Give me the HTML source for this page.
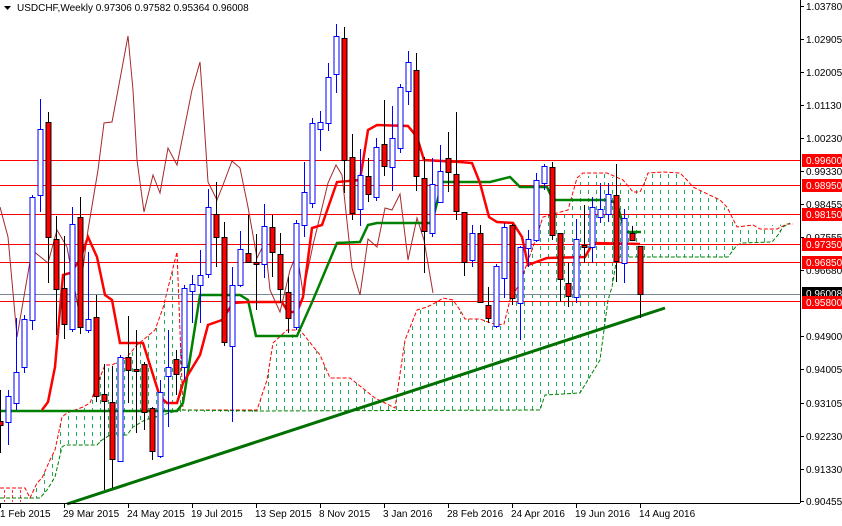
<!DOCTYPE html>
<html><head><meta charset="utf-8"><style>
html,body{margin:0;padding:0;background:#fff;}
body{width:842px;height:521px;overflow:hidden;font-family:"Liberation Sans",sans-serif;}
svg text{font-family:"Liberation Sans",sans-serif;font-size:10px;}
</style></head><body>
<svg id="s" width="842" height="521" viewBox="0 0 842 521" xmlns="http://www.w3.org/2000/svg">
<defs>
<clipPath id="cl1"><polygon points="258,410 275,345 300,330 320,355 330,378 350,378 375,398 395,408 405,340 417,310 437,302 453,300 465,319 480,319 504,324 520,283 543,217 560,212 568,210 577,178 607,173 633,192 648,173 680,173 693,187 720,200 737,227 790,224 790,223 778,235 765,243 742,243 728,257 627,257 617,257 612,287 608,300 600,360 580,393 545,395 540,410"/></clipPath>
<clipPath id="cl2"><polygon points="25,488 30,498 37,483 42,478 50,460 55,450 62,417 67,413 83,407 90,403 105,365 112,365 127,357 137,345 155,330 163,308 177,252 183,410 258,410 258,412 183,412 145,420 133,427 127,435 110,435 102,440 97,445 65,445 62,447 55,477 47,490 40,498 30,498"/></clipPath>
</defs>
<g id="cloud1" clip-path="url(#cl1)" stroke="#22aa55" stroke-width="1" stroke-dasharray="4,4"></g>
<g id="cloud2" clip-path="url(#cl2)" stroke="#22aa55" stroke-width="1" stroke-dasharray="4,4"></g>
<g stroke="#ff3333" stroke-width="1" stroke-dasharray="3,2">
<line x1="4.5" y1="490" x2="4.5" y2="502"/><line x1="12.5" y1="490" x2="12.5" y2="502"/><line x1="20.5" y1="490" x2="20.5" y2="502"/>
</g>
<polyline fill="none" stroke="#ff0000" stroke-width="1" points="0,488 25,488 30,498 37,483 42,478 50,460 55,450 62,417 67,413 83,407 90,403 105,365 112,365 127,357 137,345 155,330 163,308 177,252 183,410 257,410 267,380 273,343 287,330 300,330 320,355 330,378 350,378 375,398 395,408 405,340 417,310 427,307 437,302 443,298 453,300 460,310 465,319 480,319 488,322 497,325 504,324 510,300 520,283 533,247 543,217 557,213 568,210 577,178 583,173 607,173 623,180 633,192 640,192 645,182 648,173 663,172 680,173 687,180 693,187 720,200 727,207 737,227 753,225 760,229 777,229 787,224 793,224" stroke-dasharray="4,2"/>
<polyline fill="none" stroke="#008000" stroke-width="1" points="0,498 30,498 40,498 47,490 55,477 62,447 65,445 97,445 102,440 110,435 127,435 133,427 145,420 180,410 258,411 540,410 545,395 580,393 600,360 608,300 612,287 617,257 728,257 737,245 742,243 772,242 778,235 783,227 790,223" stroke-dasharray="4,2"/>
<g stroke="#ff0000" stroke-width="1">
<line x1="0" y1="160.5" x2="800" y2="160.5"/><line x1="0" y1="185.5" x2="800" y2="185.5"/><line x1="0" y1="214.5" x2="800" y2="214.5"/><line x1="0" y1="244.5" x2="800" y2="244.5"/><line x1="0" y1="262.5" x2="800" y2="262.5"/><line x1="0" y1="301.5" x2="800" y2="301.5"/>
</g>
<line x1="0" y1="294.5" x2="800" y2="294.5" stroke="#778899" stroke-width="1"/>
<polyline fill="none" stroke="#a52a2a" stroke-width="1" points="0,207 8,237 17,337 32,250 48,263 57,230 67,247 78,307 88,230 98,170 104,123 112,122 118,90 128,36 133,90 137,160 144,212 153,175 160,193 168,148 177,165 192,90 200,62 202,90 208,182 217,200 223,185 232,161 240,168 248,207 257,258 265,242 270,290 280,312 290,270 297,253 303,293 313,245 328,183 336,165 342,175 352,268 360,295 368,239 377,247 385,208 392,210 400,194 408,260 417,218 424,240 433,293"/>
<polyline fill="none" stroke="#008000" stroke-width="2.5" points="0,411 177,411 183,403 200,295 240,295 248,300 256,336 297,336 313,300 337,243 360,242 368,225 377,223 432,223 442,182 490,182 510,177 520,187 547,187 553,200 607,200 617,203 625,232 641,232"/>
<polyline fill="none" stroke="#ff0000" stroke-width="2.5" points="42,410 48,402 55,367 63,275 70,273 80,260 88,237 97,257 105,295 112,300 120,343 143,343 160,397 167,403 177,403 183,383 200,355 208,325 222,320 233,303 248,302 282,302 288,312 297,312 303,297 312,228 322,225 337,182 360,180 368,130 377,125 408,126 417,137 424,160 460,162 472,163 480,183 489,217 497,222 513,223 522,237 528,265 547,258 585,257 593,243 640,244"/>
<line x1="67" y1="504" x2="665" y2="308" stroke="#007000" stroke-width="3"/>
<g id="candles"></g>
<line x1="800.5" y1="0" x2="800.5" y2="503" stroke="#000"/>
<line x1="0" y1="503.5" x2="800" y2="503.5" stroke="#000"/>
<g id="axis"></g>
<text x="17" y="11" style="font-size:10px">USDCHF,Weekly  0.97306 0.97582 0.95364 0.96008</text>
<polygon points="4,6 11,6 7.5,10" fill="#000"/>
</svg>
<script>
var NS="http://www.w3.org/2000/svg";
function el(p,t,a,txt){var e=document.createElementNS(NS,t);for(var k in a)e.setAttribute(k,a[k]);if(txt)e.textContent=txt;p.appendChild(e);return e;}
var c1=document.getElementById('cloud1'),c2=document.getElementById('cloud2');
for(var x=4.5;x<800;x+=8){el(c1,'line',{x1:x,y1:150,x2:x,y2:420});el(c2,'line',{x1:x,y1:240,x2:x,y2:505});}
var D=[[0,'d',421,425,390,453],[8,'u',396,422,390,445],[16,'u',372,403,318,410],[24,'u',319,367,315,373],[32,'u',197,320,195,330],[40,'u',129,195,99,212],[48,'d',122,237,112,283],[56,'d',239,289,216,335],[64,'d',288,324,236,339],[72,'u',224,329,207,332],[80,'d',217,327,197,334],[88,'u',319,330,252,333],[96,'d',317,396,295,402],[104,'d',394,401,364,490],[112,'d',402,459,366,488],[120,'u',357,461,355,462],[128,'d',357,370,316,403],[136,'d',369,371,330,433],[144,'d',364,412,362,430],[152,'d',408,451,407,460],[160,'u',392,456,380,458],[168,'u',367,376,330,427],[176,'d',359,374,350,395],[184,'u',288,367,285,380],[192,'u',284,291,275,323],[200,'u',275,285,250,323],[208,'u',207,274,189,278],[216,'d',214,237,182,267],[224,'d',237,342,222,346],[232,'u',285,346,267,422],[240,'u',249,285,231,287],[248,'d',253,262,215,263],[256,'d',262,264,234,310],[264,'u',226,264,204,278],[272,'d',227,252,215,277],[280,'d',254,289,233,303],[288,'d',292,318,277,333],[296,'u',223,327,220,330],[304,'u',192,225,162,237],[312,'u',123,203,118,208],[320,'u',122,129,111,151],[328,'u',77,123,63,131],[336,'u',36,74,24,93],[344,'d',38,160,27,193],[352,'d',157,213,134,220],[360,'u',175,209,149,226],[368,'d',176,194,158,202],[376,'u',147,197,138,201],[384,'d',144,166,100,176],[392,'u',138,167,106,191],[400,'u',87,148,84,153],[408,'u',62,91,51,105],[416,'d',70,176,53,191],[424,'d',178,231,157,273],[432,'u',184,233,158,237],[440,'u',171,202,145,203],[448,'d',158,172,132,192],[456,'d',174,211,112,220],[464,'d',212,262,212,276],[472,'u',233,260,225,267],[480,'d',233,302,225,302],[488,'d',305,318,287,323],[496,'u',266,326,264,328],[504,'u',227,278,223,298],[512,'d',225,298,224,305],[520,'u',247,303,246,340],[528,'u',239,248,230,267],[536,'u',180,240,173,242],[544,'u',166,183,164,190],[552,'d',167,235,162,240],[560,'d',233,279,233,302],[568,'d',283,296,263,307],[576,'u',239,297,219,303],[584,'d',245,247,205,263],[592,'u',207,247,197,263],[600,'u',209,217,183,223],[608,'u',194,214,183,222],[616,'d',195,261,164,282],[624,'u',218,263,209,283],[632,'d',233,240,226,241],[640,'d',246,294,246,318]];
var g=document.getElementById('candles');
D.forEach(function(d){var x=d[0]+0.5,up=d[1]=='u';var col=up?'#0000ff':'#000';
el(g,'line',{x1:x,y1:d[4],x2:x,y2:d[5],stroke:col});
el(g,'rect',{x:x-2.5,y:d[2]+0.5,width:5,height:Math.max(1,d[3]-d[2]),fill:up?'#fff':'#ff0000',stroke:col});});
var ax=document.getElementById('axis');
[['1.03780',6],['1.02905',39],['1.02005',72],['1.01130',105],['1.00230',138],['0.99330',171],['0.98455',204],['0.97555',237],['0.96680',270],['0.94900',336],['0.94005',369],['0.93105',403],['0.92230',436],['0.91330',469],['0.90455',501]].forEach(function(l){
el(ax,'line',{x1:800,y1:l[1]+0.5,x2:804,y2:l[1]+0.5,stroke:'#000'});el(ax,'text',{x:806,y:l[1]+4},l[0]);});
function box(y,t,c){el(ax,'rect',{x:802,y:y-6,width:40,height:13,fill:c});el(ax,'text',{x:806,y:y+4,fill:'#fff'},t);}
box(160,'0.99600','#ff0000');box(185,'0.98950','#ff0000');box(214,'0.98150','#ff0000');box(244,'0.97350','#ff0000');box(262,'0.96850','#ff0000');box(293,'0.96008','#000');box(302,'0.95800','#ff0000');
[['1 Feb 2015',0],['29 Mar 2015',64],['24 May 2015',128],['19 Jul 2015',192],['13 Sep 2015',256],['8 Nov 2015',320],['3 Jan 2016',384],['28 Feb 2016',448],['24 Apr 2016',512],['19 Jun 2016',576],['14 Aug 2016',640]].forEach(function(l){
el(ax,'line',{x1:l[1]+0.5,y1:503,x2:l[1]+0.5,y2:508,stroke:'#000'});el(ax,'text',{x:l[1]+(l[1]?-1:0),y:517},l[0]);});
</script>
</body></html>
